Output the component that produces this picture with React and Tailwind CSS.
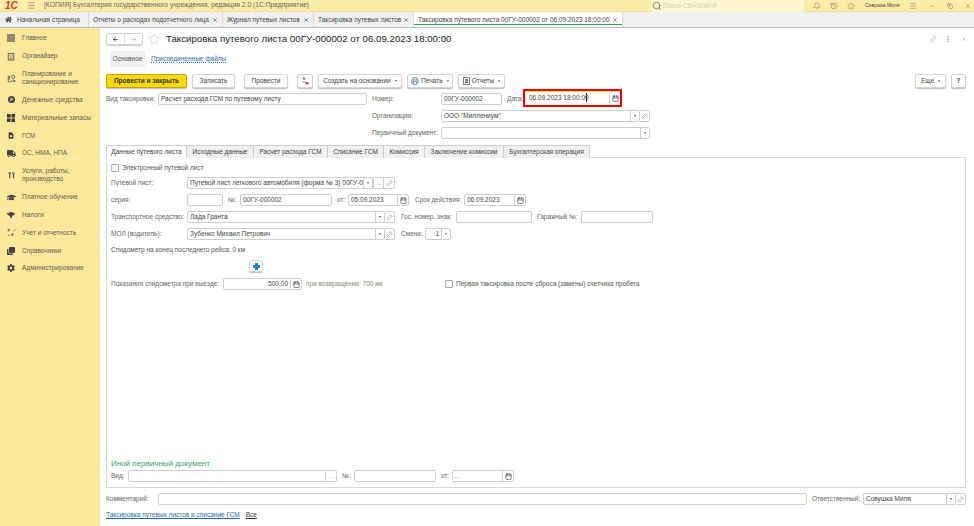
import { ArrowLeft, ArrowRight, Bell, Calendar, History, Link2, Menu, Minus, MoreVertical, Printer, Search, Star, X, Copy } from "lucide-react";
import { FaCog, FaGraduationCap, FaHome, FaTruck, FaClone } from "react-icons/fa";

const LinesIcon = () => (
  <svg width="8" height="8" viewBox="0 0 10 10" fill="#555"><rect y="0.5" width="10" height="1.6" /><rect y="3" width="10" height="1.6" /><rect y="5.5" width="10" height="1.6" /><rect y="8" width="10" height="1.6" /></svg>
);
const ClipIcon = () => (
  <svg width="8" height="9" viewBox="0 0 10 10" fill="none" stroke="#666" strokeWidth="1.2"><rect x="1.5" y="1.2" width="7" height="8.2" /><path d="M3 3.5h4M3 5.5h4M3 7.5h4" strokeWidth="0.8" /></svg>
);
const PlanIcon = () => (
  <svg width="9" height="9" viewBox="0 0 11 11" fill="none" stroke="#555" strokeWidth="1"><path d="M1.5 2v7.5h3M3 2v5" /><circle cx="7.5" cy="3.5" r="2" /><path d="M5 8.5h5M8 7l2 1.500L8 10" /></svg>
);
const MoneyIcon = () => (
  <svg width="7" height="7" viewBox="0 0 10 10"><circle cx="5" cy="5" r="5" fill="#444" /><path d="M4 7.5V3h1.600a1.200 1.200 0 0 1 0 2.600H3.200" fill="none" stroke="#fbe89b" strokeWidth="1" /></svg>
);
const GridIcon = () => (
  <svg width="8" height="8" viewBox="0 0 10 10" fill="#3f3f3f"><rect width="4.500" height="4.500" /><rect x="5.500" width="4.500" height="4.500" /><rect y="5.500" width="4.500" height="4.500" /><rect x="5.500" y="5.500" width="4.500" height="4.500" /></svg>
);
const FuelIcon = () => (
  <svg width="6" height="7" viewBox="0 0 9 10"><path d="M1 0h4l3 3v7H1z" fill="#3f3f3f" /><rect x="3" y="4.500" width="3" height="3" fill="#fbe89b" /></svg>
);
const ToolsIcon = () => (
  <svg width="7" height="7" viewBox="0 0 10 10" fill="none" stroke="#444" strokeWidth="1.500"><path d="M0.500 1.500h4M2.500 1.500V9M6 1.500h3.500M7.800 3.500V9M6.800 3.500h2" /></svg>
);
const TaxIcon = () => (
  <svg width="8" height="8" viewBox="0 0 11 10" fill="#444"><path d="M0 1.500l2.500 1L4 0.500l1.500 1L7 0.500l1.500 2 2.500-1-1 3.500-2.500 1L5.500 10 3.500 6 1 5z" /></svg>
);
const ReportIcon = () => (
  <svg width="9" height="9" viewBox="0 0 11 11" fill="none" stroke="#444" strokeWidth="0.9"><path d="M2 1v3M0.500 2.500h3M6.500 6v4M5 8h3M8 4l2-2M1 9h2" /></svg>
);

const menu = [
  { icon: <LinesIcon />, label: "Главное", h: "h-[17.8px]" },
  { icon: <ClipIcon />, label: "Органайзер", h: "h-[17.8px]" },
  { icon: <PlanIcon />, label: "Планирование и санкционирование", h: "h-[26px]" },
  { icon: <MoneyIcon />, label: "Денежные средства", h: "h-[17.8px]" },
  { icon: <GridIcon />, label: "Материальные запасы", h: "h-[17.8px]" },
  { icon: <FuelIcon />, label: "ГСМ", h: "h-[17.8px]" },
  { icon: <FaTruck size={9} color="#444" />, label: "ОС, НМА, НПА", h: "h-[17.8px]" },
  { icon: <ToolsIcon />, label: "Услуги, работы, производство", h: "h-[26px]" },
  { icon: <FaGraduationCap size={9} color="#444" />, label: "Платное обучение", h: "h-[17.8px]" },
  { icon: <TaxIcon />, label: "Налоги", h: "h-[17.8px]" },
  { icon: <ReportIcon />, label: "Учет и отчетность", h: "h-[17.8px]" },
  { icon: <FaClone size={8} color="#444" />, label: "Справочники", h: "h-[17.8px]" },
  { icon: <FaCog size={8} color="#444" />, label: "Администрирование", h: "h-[17.8px]" },
];

const Drop = () => (
  <span className="flex w-[9px] h-full shrink-0 items-center justify-center border-l border-[#d0d0d0]">
    <span className="w-0 h-0 border-x-[1.5px] border-x-transparent border-t-[2px] border-t-[#555]" />
  </span>
);
const Dots = ({ grow = false }) => (
  <span className={`flex h-full shrink-0 items-center justify-center border-l border-[#d0d0d0] text-[6px] leading-none text-[#999] ${grow ? "w-[11px]" : "w-[10px]"}`}>...</span>
);
const LinkIcon = () => <Link2 size={7} strokeWidth={1.5} color="#777" className="-rotate-45" />;
const Cal = () => (
  <span className="flex w-[11px] h-full shrink-0 items-center justify-center border-l border-[#d0d0d0]">
    <Calendar size={7} strokeWidth={2.2} color="#444" />
  </span>
);

const Field = ({ className = "", value = "", right = false, children }) => (
  <div className={`flex h-[12px] shrink-0 items-center rounded-[2px] border border-[#cfcfcf] bg-white ${className}`}>
    <span className={`min-w-0 flex-1 overflow-hidden whitespace-nowrap px-[2px] text-[6.5px] leading-[10px] text-[#444] ${right ? "text-right" : ""}`}>{value}</span>
    {children}
  </div>
);

// кнопка "открыть", пристыкованная справа к полю
const LinkBox = () => (
  <div className="flex h-[12px] w-[10px] shrink-0 items-center justify-center rounded-r-[2px] border border-l-0 border-[#cfcfcf] bg-white">
    <LinkIcon />
  </div>
);

const Label = ({ className = "", children }) => (
  <span className={`shrink-0 whitespace-nowrap text-[6.5px] leading-[12px] text-[#666] ${className}`}>{children}</span>
);

const CmdButton = ({ className = "", children }) => (
  <div className={`flex h-[14px] shrink-0 items-center justify-center gap-[2px] rounded-[2px] border border-[#d4d4d4] bg-white text-[6.5px] text-[#444] shadow-[0_1px_1px_#bbb] ${className}`}>
    {children}
  </div>
);
const Tri = () => <span className="ml-[2px] w-0 h-0 border-x-[1.5px] border-x-transparent border-t-[2px] border-t-[#666]" />;

const tabs = [
  { label: "Отчеты о расходах подотчетного лица", w: "w-[134px]" },
  { label: "Журнал путевых листов", w: "w-[91px]" },
  { label: "Таксировка путевых листов", w: "w-[100px]" },
];

const formTabs = [
  ["Исходные данные", "w-[67px]"],
  ["Расчет расхода ГСМ", "w-[74px]"],
  ["Списание ГСМ", "w-[56px]"],
  ["Комиссия", "w-[41px]"],
  ["Заключение комиссии", "w-[79px]"],
  ["Бухгалтерская операция", "w-[86px]"],
];

export default function App() {
  return (
    <div className="flex h-screen w-full flex-col overflow-hidden bg-white font-['Liberation_Sans',Arial,sans-serif]">
      {/* title */}
      <div className="flex h-[12px] shrink-0 items-center bg-[#fbeca8] border-b border-[#f3e08c]">
        <span className="ml-[5px] w-[17px] text-[10px] font-bold italic leading-none text-[#d0451b]">1С</span>
        <Menu size={9} strokeWidth={1.5} color="#666" className="ml-[5px]" />
        <span className="ml-[8px] whitespace-nowrap text-[6.7px] text-[#666]">[КОПИЯ] Бухгалтерия государственного учреждения, редакция 2.0 (1С:Предприятие)</span>
        <div className="ml-auto flex h-full items-center">
          <div className="flex h-[12px] w-[153px] items-center gap-[1px] bg-[#fdf5d0] pl-[1px]">
            <Search size={10} strokeWidth={1.5} color="#555" />
            <span className="whitespace-nowrap text-[6.5px] text-[#cfcdb0]">Поиск Ctrl+Shift+F</span>
          </div>
          <Bell size={8} strokeWidth={1.2} color="#555" className="ml-[9px]" />
          <History size={8} strokeWidth={1.2} color="#555" className="ml-[9px]" />
          <Star size={8} strokeWidth={1.2} color="#555" className="ml-[9px]" />
          <span className="ml-[10px] w-[37px] whitespace-nowrap text-[5px] text-[#444]">Совушка Миля</span>
          <Menu size={8} strokeWidth={1.2} color="#555" className="ml-[7px]" />
          <Minus size={6} strokeWidth={1.5} color="#555" className="ml-[12px]" />
          <Copy size={6} strokeWidth={1.5} color="#555" className="ml-[12px]" />
          <X size={8} strokeWidth={1.2} color="#555" className="ml-[11px] mr-[2px]" />
        </div>
      </div>
      {/* open tabs */}
      <div className="flex h-[16px] shrink-0 items-stretch border-b border-[#bdbdbd] bg-[#f0f0f0] text-[6.5px] text-[#444]">
        <div className="flex w-[89px] items-center border-r border-[#d8d8d8] pl-[5px]">
          <FaHome size={7} color="#444" />
          <span className="ml-[5px] whitespace-nowrap">Начальная страница</span>
        </div>
        {tabs.map((t) => (
          <div key={t.label} className={`flex items-center justify-between border-r border-[#d8d8d8] px-[4px] ${t.w}`}>
            <span className="whitespace-nowrap">{t.label}</span>
            <X size={6} strokeWidth={2.5} color="#555" />
          </div>
        ))}
        <div className="flex w-[209px] items-center justify-between border-r border-r-[#d8d8d8] bg-white px-[4px] shadow-[inset_0_-2px_0_#fff,inset_0_-3px_0_#2fa866]">
          <span className="whitespace-nowrap">Таксировка путевого листа 00ГУ-000002 от 06.09.2023 18:00:00</span>
          <X size={6} strokeWidth={2.5} color="#555" />
        </div>
      </div>
      <div className="flex min-h-0 flex-1">
        {/* section panel */}
        <div className="flex w-[100px] shrink-0 flex-col bg-[#fbe89b] pt-[1.5px]">
          {menu.map((m) => (
            <div key={m.label} className={`flex items-center ${m.h}`}>
              <span className="flex w-[22px] shrink-0 justify-center">{m.icon}</span>
              <span className="text-[6.5px] leading-[8px] text-[#5f5f50]">{m.label}</span>
            </div>
          ))}
        </div>
        {/* form */}
        <div className="min-w-0 flex-1 pl-[6px] pr-[8px]">
          <div className="mt-[5px] flex h-[12px] items-center">
            <div className="flex h-[12px] w-[37px] rounded-[2px] border border-[#d4d4d4] shadow-[0_1px_1px_#ccc]">
              <span className="flex flex-1 items-center justify-center border-r border-[#ddd]"><ArrowLeft size={7} strokeWidth={2.5} color="#333" /></span>
              <span className="flex flex-1 items-center justify-center"><ArrowRight size={7} strokeWidth={2} color="#aaa" /></span>
            </div>
            <Star size={12} strokeWidth={1} color="#bbb" className="ml-[5px]" />
            <span className="ml-[6px] whitespace-nowrap text-[9.7px] leading-none text-[#222]">Таксировка путевого листа 00ГУ-000002 от 06.09.2023 18:00:00</span>
            <div className="ml-auto flex items-center">
              <Link2 size={8} strokeWidth={1.2} color="#888" className="-rotate-45" />
              <MoreVertical size={8} strokeWidth={1.5} color="#777" className="ml-[7px]" />
              <X size={6} strokeWidth={1.5} color="#888" className="ml-[9px] mr-[-1px]" />
            </div>
          </div>
          <div className="ml-[4px] mt-[6px] flex h-[16px] items-center text-[6.5px]">
            <span className="flex h-full w-[35px] items-center justify-center bg-[#f0f0f0] text-[#555]">Основное</span>
            <span className="ml-[6px] text-[#2b6cb0] underline decoration-dotted">Присоединенные файлы</span>
          </div>
          <div className="mt-[7px] flex h-[14px] items-center">
            <div className="flex h-[14px] w-[81px] items-center justify-center rounded-[2px] border border-[#c9a400] bg-[#fbd90f] text-[6.5px] font-bold text-[#333] shadow-[0_1px_1px_#bbb]">Провести и закрыть</div>
            <CmdButton className="ml-[5px] w-[43px]">Записать</CmdButton>
            <CmdButton className="ml-[9px] w-[44px]">Провести</CmdButton>
            <CmdButton className="ml-[9px] w-[16px]">
              <svg width="8" height="8" viewBox="0 0 8 8"><circle cx="3" cy="1.500" r="1.300" fill="#6b8fc4" /><path d="M1 5.500q2-2.500 4 0z" fill="#6b8fc4" /><rect x="4.500" y="5" width="3" height="2.500" fill="#d9534f" /></svg>
            </CmdButton>
            <CmdButton className="ml-[5px] w-[84px]">Создать на основании<Tri /></CmdButton>
            <CmdButton className="ml-[5px] w-[46px]"><Printer size={8} strokeWidth={2} color="#2f5f8a" />Печать<Tri /></CmdButton>
            <CmdButton className="ml-[5px] w-[47px]">
              <svg width="7" height="8" viewBox="0 0 7 8"><rect x="0.500" y="0.500" width="6" height="7" fill="#fff" stroke="#888" /><rect x="2" y="2" width="3" height="2" fill="#4a9d5b" /><rect x="2" y="4.500" width="3" height="1.500" fill="#c0392b" /></svg>
              Отчеты<Tri />
            </CmdButton>
            <CmdButton className="ml-auto w-[31px]">Еще<Tri /></CmdButton>
            <CmdButton className="ml-[5px] w-[15px] font-bold">?</CmdButton>
          </div>
          {/* header fields */}
          <div className="mt-[5px] flex items-center">
            <Label className="w-[52px]">Вид таксировки:</Label>
            <Field className="w-[209px]" value="Расчет расхода ГСМ по путевому листу" />
            <Label className="ml-[5px] w-[69px]">Номер:</Label>
            <Field className="w-[61px]" value="00ГУ-000002" />
            <Label className="ml-[5px] w-[16px]">Дата:</Label>
            {/* подсветка поля даты на скриншоте */}
            <div className="-mt-[4px] -mb-[2px] flex h-[18px] w-[99px] items-center border-2 border-[#ee0000] bg-white shadow-[inset_0_1px_0_#f5d76e]">
              <span className="flex-1 whitespace-nowrap pl-[4px] text-[6.5px] text-[#444]">
                06.09.2023 18:00:
                <span>0</span>
                <span className="relative">
                  0
                  <span className="absolute left-[1px] top-[-1px] h-[9px] w-[1px] bg-[#1a2f7a]" />
                </span>
              </span>
              <Cal />
            </div>
          </div>
          <div className="mt-[5px] flex items-center pl-[266px]">
            <Label className="w-[69px]">Организация:</Label>
            <Field className="w-[199px]" value='ООО "Миллениум"'><Drop /></Field>
            <LinkBox />
          </div>
          <div className="mt-[5px] flex items-center pl-[266px]">
            <Label className="w-[69px]">Первичный документ:</Label>
            <Field className="w-[209px]"><Drop /></Field>
          </div>
          {/* tabs */}
          <div className="mt-[6px] flex h-[13px] items-stretch text-[6.5px] text-[#444]">
            <div className="flex w-[81px] items-center justify-center rounded-t-[2px] border-x border-t border-[#d0d0d0] bg-white">Данные путевого листа</div>
            {formTabs.map(([label, w]) => (
              <div key={label} className={`flex items-center justify-center whitespace-nowrap border-t border-r border-[#d0d0d0] bg-[#f0f0f0] ${w}`}>{label}</div>
            ))}
          </div>
          <div className="-mt-px flex h-[331px] flex-col border border-[#d8d8d8] pl-[4px]">
            <div className="mt-[5px] flex h-[9px] items-center">
              <span className="h-[8px] w-[8px] rounded-[1px] border border-[#aaa]" />
              <span className="ml-[3px] text-[6.5px] text-[#555]">Электронный путевой лист</span>
            </div>
            <div className="mt-[5px] flex items-center">
              <Label className="w-[76px]">Путевой лист:</Label>
              <Field className="w-[186px]" value="Путевой лист легкового автомобиля (форма № 3) 00ГУ-0"><Drop /></Field>
              <div className="flex h-[12px] w-[22px] shrink-0 items-center rounded-r-[2px] border border-l-0 border-[#cfcfcf] bg-white">
                <Dots />
                <span className="flex h-full flex-1 items-center justify-center border-l border-[#d0d0d0]"><LinkIcon /></span>
              </div>
            </div>
            <div className="mt-[5px] flex items-center">
              <Label className="w-[76px]">серия:</Label>
              <Field className="w-[36px]" />
              <Label className="ml-[5px] w-[12px]">№:</Label>
              <Field className="w-[92px]" value="00ГУ-000002" />
              <Label className="ml-[5px] w-[11px]">от:</Label>
              <Field className="w-[61px]" value="05.09.2023"><Cal /></Field>
              <Label className="ml-[6px] w-[49px]">Срок действия:</Label>
              <Field className="w-[62px]" value="06.09.2023"><Cal /></Field>
            </div>
            <div className="mt-[5px] flex items-center">
              <Label className="w-[76px]">Транспортное средство:</Label>
              <Field className="w-[198px]" value="Лада Гранта"><Drop /></Field>
              <LinkBox />
              <Label className="ml-[6px] w-[55px]">Гос. номер. знак:</Label>
              <Field className="w-[76px]" />
              <Label className="ml-[5px] w-[44px]">Гаражный №:</Label>
              <Field className="w-[72px]" />
            </div>
            <div className="mt-[5px] flex items-center">
              <Label className="w-[76px]">МОЛ (водитель):</Label>
              <Field className="w-[198px]" value="Зубенко Михаил Петрович"><Drop /></Field>
              <LinkBox />
              <Label className="ml-[6px] w-[24px]">Смена:</Label>
              <Field className="w-[26px]" value="1" right><Drop /></Field>
            </div>
            <div className="mt-[4px] text-[6.5px] leading-[12px] text-[#555]">Спидометр на конец последнего рейса: 0 км</div>
            <div className="ml-[138px] mt-[4px] flex h-[12px] w-[14px] items-center justify-center rounded-[2px] border border-[#d4d4d4] shadow-[0_1px_1px_#bbb]">
              <svg width="7" height="7" viewBox="0 0 7 7" fill="#1f86c7"><path d="M2 0h3v2h2v3H5v2H2V5H0V2h2z" /></svg>
            </div>
            <div className="mt-[6px] flex items-center">
              <Label className="w-[112px]">Показания спидометра при выезде:</Label>
              <Field className="w-[79px]" value="500,00" right><Cal /></Field>
              <span className="ml-[4px] w-[139px] whitespace-nowrap text-[6.5px] text-[#8a8a6a]">при возвращении: 700 км</span>
              <span className="h-[8px] w-[8px] rounded-[1px] border border-[#aaa]" />
              <span className="ml-[3px] whitespace-nowrap text-[6.5px] text-[#555]">Первая таксировка после сброса (замены) счетчика пробега</span>
            </div>
            <div className="mt-auto whitespace-nowrap text-[8px] leading-[10px] text-[#2fa866]">Иной первичный документ</div>
            <div className="mb-[5px] mt-[1px] flex items-center">
              <Label className="w-[17px]">Вид:</Label>
              <Field className="w-[209px]"><Dots grow /></Field>
              <Label className="ml-[5px] w-[12px]">№:</Label>
              <Field className="w-[82px]" />
              <Label className="ml-[5px] w-[11px]">от:</Label>
              <Field className="w-[62px]" value=" .  ."><Cal /></Field>
            </div>
          </div>
          <div className="mt-[5px] flex items-center">
            <Label className="w-[52px]">Комментарий:</Label>
            <Field className="w-[649px]" />
            <Label className="ml-[5px] w-[51px]">Ответственный:</Label>
            <Field className="w-[93px]" value="Совушка Миля"><Drop /></Field>
            <LinkBox />
          </div>
          <div className="mt-[5px] flex items-center text-[6.5px] leading-[10px]">
            <span className="text-[#2b6cb0] underline">Таксировка путевых листов и списание ГСМ</span>
            <span className="ml-[6px] text-[#333] underline">Все</span>
          </div>
        </div>
      </div>
    </div>
  );
}
